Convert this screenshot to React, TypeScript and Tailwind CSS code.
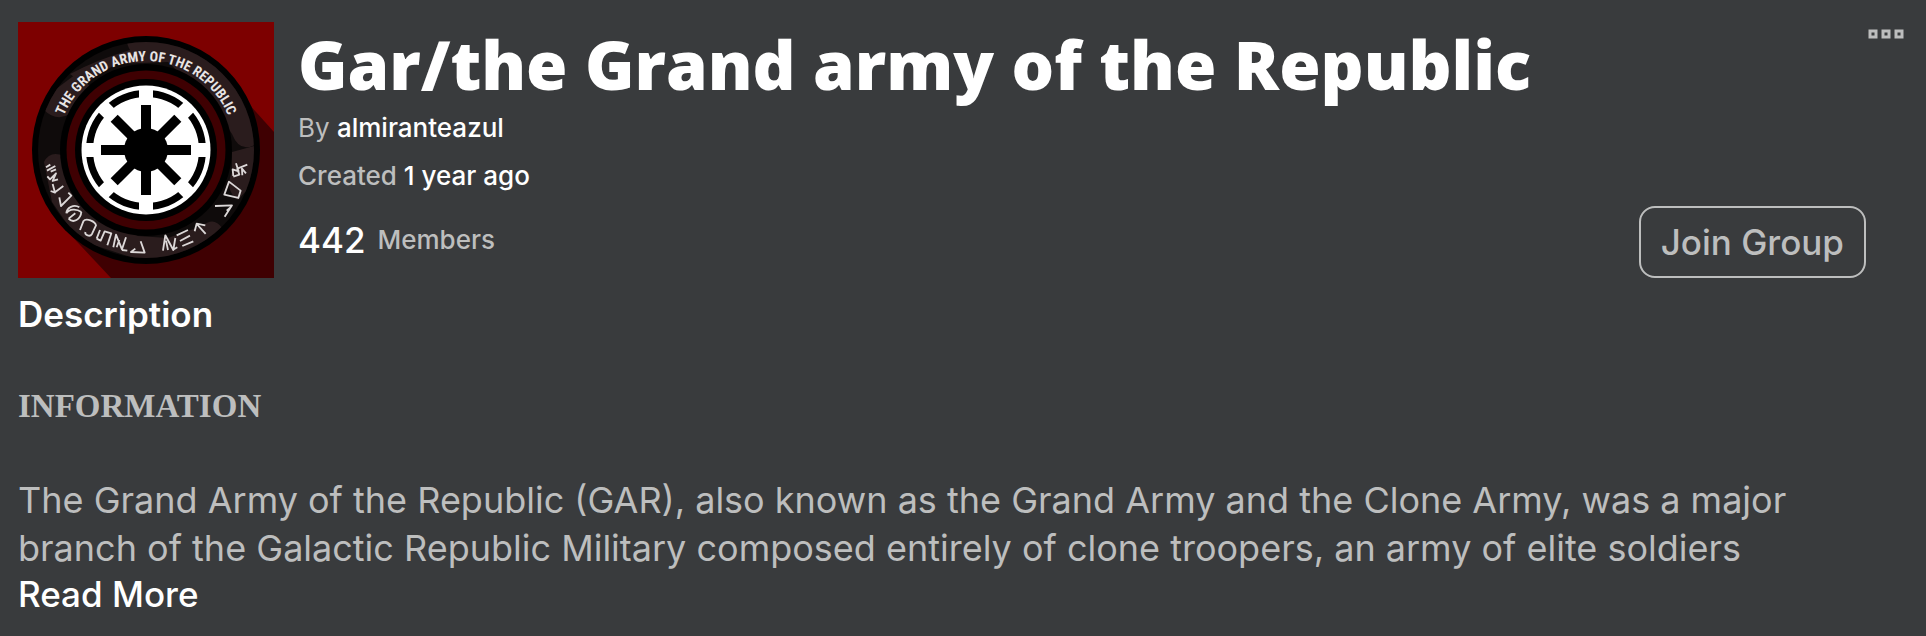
const DASHED_AXES = [0, 45, 90, 135];

function GroupEmblem() {
  return (
    <svg
      viewBox="0 0 256 256"
      role="img"
      aria-label="Group emblem"
      className="size-64 shrink-0"
    >
      <defs>
        <path id="motto-arc" d="M39 128a89 89 0 0 1 178 0" />
        <clipPath id="band">
          <circle cx="128" cy="128" r="108" />
        </clipPath>
      </defs>
      <rect width="256" height="256" fill="#7d0000" />
      <path d="M256 110L204 52L48 208L93 256H256Z" fill="#3f0002" />

      <circle cx="128" cy="128" r="114" fill="#000" />
      <circle cx="128" cy="128" r="108" fill="#0f0b0b" />
      <g clipPath="url(#band)" fill="#2a1c1d">
        <path d="M26 88Q38 100 52 92L72 64L58 52L34 70Z" />
        <path d="M52 52Q78 38 112 28Q104 14 118 16L170 22L208 50L232 88L238 122Q222 132 214 112L196 84L150 40L98 42L66 62Z" />
        <path d="M26 140Q32 128 46 134L52 158L76 190L120 214L150 216L184 204Q196 194 204 206L190 232L128 240L60 218L34 180Z" />
        <path d="M214 130L236 124L236 160L220 178Q206 168 214 150Z" />
      </g>
      <circle cx="128" cy="128" r="86" fill="#000" />
      <circle cx="128" cy="128" r="79.5" fill="#3f0002" />
      <circle cx="128" cy="128" r="71" fill="#000" />
      <circle cx="128" cy="128" r="64.5" fill="#fff" />

      <circle cx="128" cy="128" r="56.5" fill="none" stroke="#000" strokeWidth="7" />
      <g stroke="#fff" strokeWidth="14">
        {DASHED_AXES.map((angle) => (
          <path key={angle} d="M128 66V190" transform={`rotate(${angle} 128 128)`} />
        ))}
      </g>
      <g stroke="#000" strokeWidth="10">
        {DASHED_AXES.map((angle) => (
          <path key={angle} d="M128 83V173" transform={`rotate(${angle} 128 128)`} />
        ))}
      </g>
      <circle cx="128" cy="128" r="22" fill="#000" />

      <text
        fill="#e8e4e4"
        fontSize="14"
        fontWeight="700"
        textAnchor="middle"
        fontFamily="'Liberation Sans Narrow', 'Roboto Condensed', 'Liberation Sans', sans-serif"
      >
        <textPath href="#motto-arc" startOffset="50%">
          THE GRAND ARMY OF THE REPUBLIC
        </textPath>
      </text>

      {/* Symbols along the lower half of the band, drawn on a 3x grid */}
      <g
        transform="translate(-18 -22) scale(.3333)"
        fill="none"
        stroke="#dcd8d8"
        strokeWidth="5.5"
        strokeLinejoin="round"
      >
        <path d="M138 502L151 494M141 512L166 498M152 515L168 508" />
        <path d="M142 529L150 538L168 520L158 543L174 538" />
        <path d="M152 573L165 578L158 552M165 577L190 558" />
        <path d="M178 592L183 618L214 587L205 578" />
        <path d="M199 640C200 622 222 612 238 622M199 640C208 626 230 626 244 636M206 656C220 672 242 658 244 636M206 656L226 640" />
        <path d="M240 690L250 664C258 652 286 664 288 676L276 702C270 712 254 706 256 696" />
        <path d="M290 716L302 722L314 694L334 700L322 736M290 716L300 690" />
        <path d="M340 742L348 704L366 748L378 712M350 742L358 720M366 750L382 752" />
        <path d="M422 724L434 758L393 756L406 746" />
        <path d="M489 752L496 706L520 750L526 714M504 750L498 722M518 750L532 742" />
        <path d="M530 706L564 690M540 723L570 707M547 738L580 724" />
        <path d="M617 702L590 672M584 694L590 671L616 676" />
        <path d="M645 618L696 616L674 650M680 632L694 620" />
        <path d="M673 584L715 594L722 572L687 545Z" />
        <path d="M700 528L698 508L716 514L708 490M700 530L718 524L712 506L742 494M727 526L726 506L738 520" />
      </g>
    </svg>
  );
}

function MoreIcon() {
  return (
    <svg viewBox="0 0 36 10" className="h-2.5 w-9" fill="none" stroke="#bdbebe" strokeWidth="3" aria-hidden="true">
      <rect x="2" y="2" width="6" height="6" />
      <rect x="15" y="2" width="6" height="6" />
      <rect x="28" y="2" width="6" height="6" />
    </svg>
  );
}

export default function App() {
  return (
    <main className="min-h-screen bg-[#393b3d] pt-[22px] pl-[18px] font-[Inter,sans-serif] text-[#bdbebe]">
      <header className="flex">
        <GroupEmblem />
        <div className="ml-6 min-w-0 flex-1">
          <h1 className="pt-0.5 font-['Open_Sans',sans-serif] text-[67px] leading-[80px] font-extrabold text-white">
            Gar/the Grand army of the Republic
          </h1>
          <p className="mt-2 text-[26px] leading-8">
            By{" "}
            <a href="#owner" className="font-medium text-white">
              almiranteazul
            </a>
          </p>
          <p className="mt-4 text-[26px] leading-8 font-medium">
            Created <span className="text-white">1 year ago</span>
          </p>
          <p className="mt-[26px] flex items-center gap-3 leading-[44px] font-medium">
            <span className="text-[35px] text-white">442</span>
            <span className="text-[26px]">Members</span>
          </p>
        </div>
        <button
          type="button"
          className="h-[72px] shrink-0 self-end rounded-2xl border-2 border-[#bdbebe] px-5 text-[35px] leading-none font-medium whitespace-nowrap"
        >
          Join Group
        </button>
        <button type="button" aria-label="More options" className="mt-[7px] mr-[22px] ml-0.5 shrink-0 self-start">
          <MoreIcon />
        </button>
      </header>

      <section className="mt-3 pr-[60px]">
        <h2 className="text-[35px] leading-[48px] font-semibold text-white">Description</h2>
        <h3 className="mt-11 font-['Liberation_Serif',serif] text-[33px] leading-[48px] font-bold">INFORMATION</h3>
        <p className="mt-[46px] text-[36px] leading-[48px]">
          The Grand Army of the Republic (GAR), also known as the Grand Army and the Clone Army, was a major branch of
          the Galactic Republic Military composed entirely of clone troopers, an army of elite soldiers
        </p>
        <button type="button" className="block text-[35px] leading-[44px] font-medium text-white">
          Read More
        </button>
      </section>
    </main>
  );
}
